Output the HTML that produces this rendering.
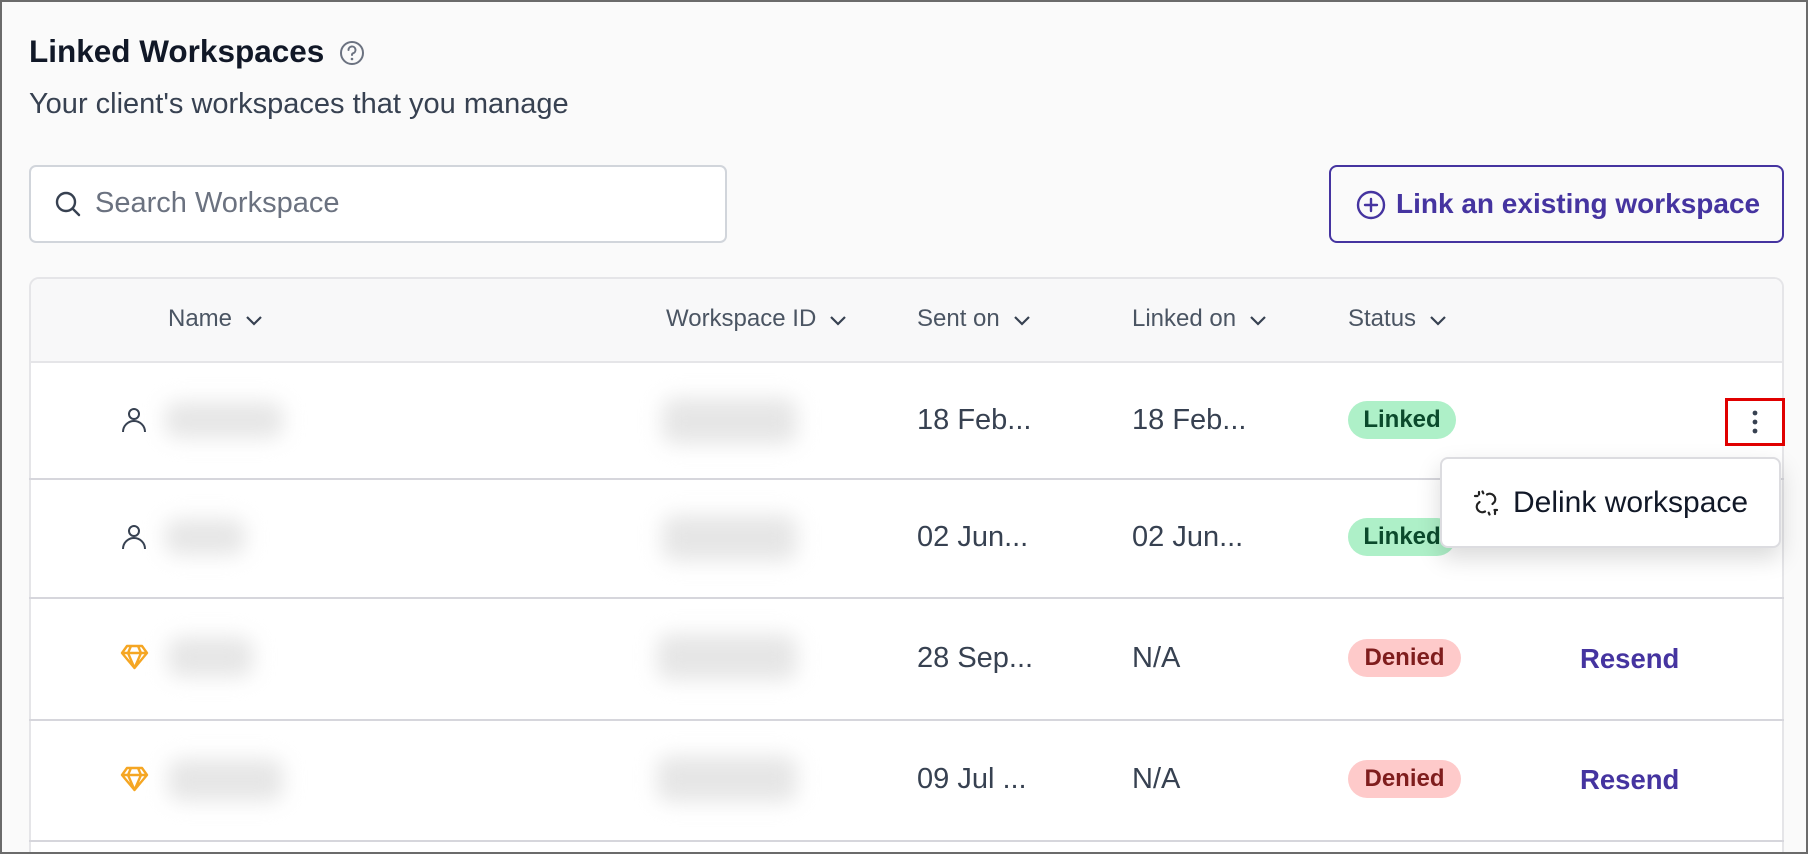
<!DOCTYPE html>
<html><head><meta charset="utf-8"><style>
*{box-sizing:border-box;margin:0;padding:0}
html,body{width:1808px;height:854px;overflow:hidden}
body{background:#fafafa;font-family:"Liberation Sans",sans-serif;position:relative}
.frame{position:absolute;left:0;top:0;width:1808px;height:854px;border:2px solid #6b6b6b;pointer-events:none;z-index:9}
.a{position:absolute;white-space:nowrap}
.blur{position:absolute;background:#e6e6e6;filter:blur(10px);border-radius:12px}
.hd{font-size:24px;color:#4b5563;top:305px}
.hd svg{vertical-align:middle;margin-left:12px}
.dt{font-size:29px;color:#374151}
.badge{position:absolute;height:38px;border-radius:19px;font-size:24px;font-weight:bold;line-height:38px;text-align:center}
.lk{background:#aef0c8;color:#0b4a2c;width:108px;left:1348px}
.dn{background:#fecaca;color:#7f1d1d;width:113px;left:1348px}
.rs{font-size:27.5px;font-weight:bold;color:#4534a0;left:1580px}
.line{position:absolute;left:29px;width:1755px;height:2px;background:#d6d6dc}
</style></head><body>
<div class="frame"></div>
<div class="a" style="left:29px;top:33px;font-size:31.5px;font-weight:bold;color:#111827">Linked Workspaces</div>
<svg class="a" style="left:339px;top:40px" width="26" height="26" viewBox="0 0 26 26"><circle cx="13" cy="13" r="11" fill="none" stroke="#6b7280" stroke-width="2"/><path d="M9.5 10a3.5 3.5 0 1 1 4.5 3.3c-.8.3-1 .8-1 1.7" fill="none" stroke="#6b7280" stroke-width="2" stroke-linecap="round"/><circle cx="13" cy="19" r="1.3" fill="#6b7280"/></svg>
<div class="a" style="left:29px;top:88px;font-size:29px;color:#374151">Your client's workspaces that you manage</div>

<div class="a" style="left:29px;top:165px;width:698px;height:78px;background:#fff;border:2px solid #d1d5db;border-radius:7px"></div>
<svg class="a" style="left:54px;top:190px" width="28" height="28" viewBox="0 0 28 28"><circle cx="12" cy="12" r="9" fill="none" stroke="#374151" stroke-width="2.4"/><path d="M18.5 18.5L25 25" stroke="#374151" stroke-width="2.4" stroke-linecap="round"/></svg>
<div class="a" style="left:95px;top:187px;font-size:29px;color:#6b7280">Search Workspace</div>

<div class="a" style="left:1329px;top:165px;width:455px;height:78px;border:2px solid #4534a0;border-radius:8px;background:#fafafa"></div>
<svg class="a" style="left:1356px;top:190px" width="30" height="30" viewBox="0 0 30 30"><circle cx="15" cy="15" r="13" fill="none" stroke="#4534a0" stroke-width="2.4"/><path d="M15 9v12M9 15h12" stroke="#4534a0" stroke-width="2.4" stroke-linecap="round"/></svg>
<div class="a" style="left:1396px;top:188px;font-size:28px;font-weight:bold;color:#4534a0">Link an existing workspace</div>

<div class="a" style="left:29px;top:277px;width:1755px;height:600px;background:#fff;border:2px solid #e5e5e8;border-radius:10px;overflow:hidden">
<div style="height:84px;background:#f8f8f9;border-bottom:2px solid #e5e5e8"></div></div>

<div class="a hd" style="left:168px">Name<svg width="20" height="12" viewBox="0 0 20 12"><path d="M3 3l7 7 7-7" fill="none" stroke="#374151" stroke-width="2.2"/></svg></div>
<div class="a hd" style="left:666px">Workspace ID<svg width="20" height="12" viewBox="0 0 20 12"><path d="M3 3l7 7 7-7" fill="none" stroke="#374151" stroke-width="2.2"/></svg></div>
<div class="a hd" style="left:917px">Sent on<svg width="20" height="12" viewBox="0 0 20 12"><path d="M3 3l7 7 7-7" fill="none" stroke="#374151" stroke-width="2.2"/></svg></div>
<div class="a hd" style="left:1132px">Linked on<svg width="20" height="12" viewBox="0 0 20 12"><path d="M3 3l7 7 7-7" fill="none" stroke="#374151" stroke-width="2.2"/></svg></div>
<div class="a hd" style="left:1348px">Status<svg width="20" height="12" viewBox="0 0 20 12"><path d="M3 3l7 7 7-7" fill="none" stroke="#374151" stroke-width="2.2"/></svg></div>

<div class="line" style="top:478px"></div>
<div class="line" style="top:597px"></div>
<div class="line" style="top:719px"></div>
<div class="line" style="top:840px"></div>

<!-- row1 -->
<svg class="a" style="left:120px;top:406px" width="28" height="28" viewBox="0 0 28 28"><circle cx="14" cy="8" r="5" fill="none" stroke="#374151" stroke-width="2"/><path d="M3 26a11 11 0 0 1 22 0" fill="none" stroke="#374151" stroke-width="2"/></svg>
<div class="blur" style="left:165px;top:402px;width:118px;height:36px"></div>
<div class="blur" style="left:662px;top:398px;width:135px;height:46px"></div>
<div class="a dt" style="left:917px;top:404px">18 Feb...</div>
<div class="a dt" style="left:1132px;top:404px">18 Feb...</div>
<div class="badge lk" style="top:401px">Linked</div>
<div class="a" style="left:1725px;top:398px;width:60px;height:48px;border:3px solid #e00000"></div>
<svg class="a" style="left:1750px;top:408px" width="10" height="28" viewBox="0 0 10 28"><circle cx="5" cy="5" r="2.4" fill="#374151"/><circle cx="5" cy="14" r="2.4" fill="#374151"/><circle cx="5" cy="23" r="2.4" fill="#374151"/></svg>

<!-- row2 -->
<svg class="a" style="left:120px;top:523px" width="28" height="28" viewBox="0 0 28 28"><circle cx="14" cy="8" r="5" fill="none" stroke="#374151" stroke-width="2"/><path d="M3 26a11 11 0 0 1 22 0" fill="none" stroke="#374151" stroke-width="2"/></svg>
<div class="blur" style="left:165px;top:519px;width:80px;height:36px"></div>
<div class="blur" style="left:662px;top:515px;width:135px;height:46px"></div>
<div class="a dt" style="left:917px;top:521px">02 Jun...</div>
<div class="a dt" style="left:1132px;top:521px">02 Jun...</div>
<div class="badge lk" style="top:518px">Linked</div>

<!-- row3 -->
<svg class="a" style="left:120px;top:644px" width="29" height="26" viewBox="0 0 29 26"><path d="M7 2h15l5 7-12.5 15L2 9z M2 9h25 M11 2l-3 7 6.5 15 6.5-15-3-7" fill="none" stroke="#f5a623" stroke-width="2.4" stroke-linejoin="round"/></svg>
<div class="blur" style="left:168px;top:637px;width:85px;height:40px"></div>
<div class="blur" style="left:657px;top:634px;width:140px;height:46px"></div>
<div class="a dt" style="left:917px;top:642px">28 Sep...</div>
<div class="a dt" style="left:1132px;top:642px">N/A</div>
<div class="badge dn" style="top:639px">Denied</div>
<div class="a rs" style="top:643px">Resend</div>

<!-- row4 -->
<svg class="a" style="left:120px;top:766px" width="29" height="26" viewBox="0 0 29 26"><path d="M7 2h15l5 7-12.5 15L2 9z M2 9h25 M11 2l-3 7 6.5 15 6.5-15-3-7" fill="none" stroke="#f5a623" stroke-width="2.4" stroke-linejoin="round"/></svg>
<div class="blur" style="left:168px;top:759px;width:115px;height:42px"></div>
<div class="blur" style="left:657px;top:756px;width:140px;height:46px"></div>
<div class="a dt" style="left:917px;top:763px">09 Jul ...</div>
<div class="a dt" style="left:1132px;top:763px">N/A</div>
<div class="badge dn" style="top:760px">Denied</div>
<div class="a rs" style="top:764px">Resend</div>

<!-- dropdown -->
<div class="a" style="left:1440px;top:457px;width:341px;height:91px;background:#fff;border:2px solid #dcdce0;border-radius:8px;box-shadow:0 10px 24px rgba(0,0,0,.15)"></div>
<svg class="a" style="left:1472px;top:489px" width="28" height="28" viewBox="0 0 28 28" fill="none" stroke="#222" stroke-width="2.2" stroke-linecap="round"><path d="M15 5.5a5.5 5.5 0 0 1 7.5 7.5l-2 2M13 22.5a5.5 5.5 0 0 1-7.5-7.5l2-2"/><path d="M7 3v2.5M3 7h2.5M23 25v-2.5M25 21h-2.5M10.5 2.5l.8 1.8M17.5 25.5l-.8-1.8"/></svg>
<div class="a" style="left:1513px;top:486px;font-size:30px;color:#111827">Delink workspace</div>
</body></html>
